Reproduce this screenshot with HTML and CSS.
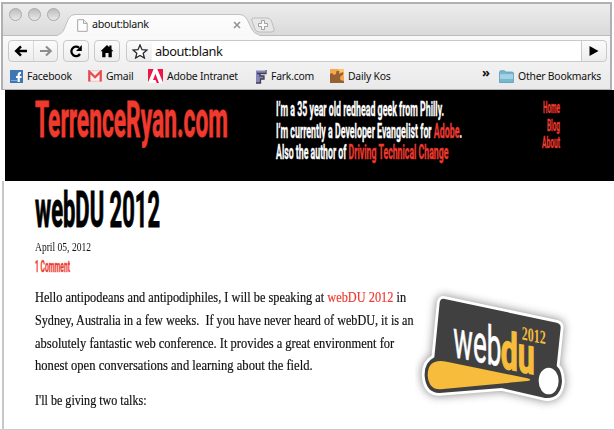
FILE: index.html
```html
<!DOCTYPE html>
<html lang="en">
<head>
<meta charset="utf-8">
<title>TerrenceRyan.com</title>
<link rel="stylesheet" href="styles.css">
</head>
<body>
<div class="window">
  <header class="chrome">
    <div class="tabstrip">
      <div class="lights"><i></i><i></i><i></i></div>
      <div class="tab">
        <svg class="tab-shape" width="202" height="22" viewBox="0 0 202 22"><defs><linearGradient id="tabfill" x2="0" y2="1"><stop stop-color="#fdfdfd"/><stop offset="1" stop-color="#f8f8f8"/></linearGradient></defs><path d="M0 21C9 20 7 1 17 1H182C192 1 191 20 201 21V22H0z" fill="url(#tabfill)"/><path d="M0 20.5C9 20 7 .5 17 .5H182C192 .5 191 20 201 20.5" fill="none" stroke="#c2c2c2"/></svg>
        <svg class="page-icon" width="11" height="13" viewBox="0 0 11 13"><path d="M.7.7H6.5L10.2 4.4V12.3H.7z" fill="#fff" stroke="#a5a5a5"/><path d="M6.5.7V4.4H10.2" fill="#eee" stroke="#a5a5a5"/></svg>
        <span class="tab-title">about:blank</span>
        <svg class="close" width="8" height="8" viewBox="0 0 8 8"><path d="M1 1L7 7M7 1L1 7" stroke="#929292" stroke-width="1.6"/></svg>
      </div>
      <svg class="newtab" width="24" height="16" viewBox="0 0 24 16"><path d="M2.5 1H16Q19 1 20.5 4L23 12Q24 15 21 15H8Q5 15 4 12L1 4Q0 1 2.5 1z" fill="#e7e7e7" stroke="#bcbcbc"/><path d="M10.5 3.5h3v3h3v3h-3v3h-3v-3h-3v-3h3z" fill="#fafafa" stroke="#999" stroke-width=".9"/></svg>
    </div>
    <div class="toolbar">
      <div class="btn pair">
        <span><svg width="14" height="12" viewBox="0 0 14 12"><path d="M13 6H3M7 1.4L2.2 6L7 10.6" fill="none" stroke="#000" stroke-width="2.5"/></svg></span>
        <span><svg width="14" height="12" viewBox="0 0 14 12"><path d="M1 6H11M7 1.4L11.8 6L7 10.6" fill="none" stroke="#8d8d8d" stroke-width="2.1"/></svg></span>
      </div>
      <div class="btn reload"><svg width="14" height="14" viewBox="0 0 14 14"><path d="M11 10A4.7 4.7 0 1 1 10 3.7" fill="none" stroke="#000" stroke-width="2.3"/><path d="M12.8 1V7H7z"/></svg></div>
      <div class="btn home"><svg width="14" height="14" viewBox="0 0 14 14"><path d="M7 1L.5 7.3H2.2V13.3H5.5V9H8.5V13.3H11.8V7.3H13.5L11.5 5.3V1.5H9.3V3.2z"/></svg></div>
      <div class="omnibox">
        <span class="star"><svg width="16" height="15" viewBox="0 0 16 15"><path d="M8 1L10 5.7L15 6.1L11.2 9.3L12.4 14L8 11.4L3.6 14L4.8 9.3L1 6.1L6 5.7z" fill="#fff" stroke="#292929" stroke-width="1.3"/></svg></span>
        <span class="url">about:blank</span>
        <span class="go"><svg width="10" height="10" viewBox="0 0 10 10"><path d="M.5 0L9.5 5L.5 10z"/></svg></span>
      </div>
    </div>
    <nav class="bookmarks">
      <a class="bm facebook"><svg width="13" height="13" viewBox="0 0 13 13"><path d="M0 0H13V13H0z" fill="#3f76b5"/><path d="M11 2H10Q7.6 2 7.6 4.5V6H6V8H7.6V12H9.8V8H11.5V6H9.8V4.7Q9.8 4 10.5 4H11z" fill="#fff"/><path d="M1 10.5H7" stroke="#83acd4"/></svg><span>Facebook</span></a>
      <a class="bm gmail"><svg width="14" height="12" viewBox="0 0 14 12"><path d="M.5.8H13.5V11.2H.5z" fill="#fbeeee" stroke="#eca7a7" stroke-width=".6"/><path d="M1.3 11.5V1.6L7 7.2L12.7 1.6V11.5" fill="none" stroke="#e64b50" stroke-width="2.2"/></svg><span>Gmail</span></a>
      <a class="bm adobe"><svg width="15" height="14" viewBox="0 0 15 14"><path d="M0 0H15V14H0z" fill="#fff"/><path d="M0 0H5.6L0 13.5zM9.3 0H15V13.5zM7.4 4.8L11 14H8.7L7.6 11H5z" fill="#ee1545"/></svg><span>Adobe Intranet</span></a>
      <a class="bm fark"><svg width="12" height="15" viewBox="0 0 12 15"><path d="M1 1.5H10V5H5V7H9V10H5V14H1" fill="#8584bd"/><path d="M2 4.5H11V1M5 5V7H9V10H5.5V14H1" fill="none" stroke="#3f3f4c" stroke-width="1.3"/></svg><span>Fark.com</span></a>
      <a class="bm kos"><svg width="14" height="14" viewBox="0 0 14 14"><path d="M0 0H14V14H0z" fill="#f6a84b"/><path d="M8 0H14V7z" fill="#ffc66b"/><path d="M0 14V5L2 4L4 6L6 5L6.5 2L9 2V5L13 3L13.5 5L10 8L10.5 11L14 12V14z" fill="#966035"/></svg><span>Daily Kos</span></a>
      <span class="more">»</span>
      <a class="bm other"><svg width="15" height="13" viewBox="0 0 15 13"><path d="M.5 12.5V2L1.5.7H5.5L6.5 2H13.5L14.5 3V12.5z" fill="#77b7d1" stroke="#4e94b1" stroke-width=".7"/><path d="M.9 4.2H14.1V9H.9z" fill="#a1d3e5"/></svg><span>Other Bookmarks</span></a>
    </nav>
  </header>

  <section class="masthead">
    <svg class="site-title display" width="200" height="52"><text x="0" y="38" textLength="193" lengthAdjust="spacingAndGlyphs">TerrenceRyan.com</text></svg>
    <svg class="intro display" width="200" height="70">
      <text x="0" y="17" textLength="168" lengthAdjust="spacingAndGlyphs">I’m a 35 year old redhead geek from Philly.</text>
      <text x="0" y="38.5" textLength="186" lengthAdjust="spacingAndGlyphs">I’m currently a Developer Evangelist for <tspan class="link">Adobe</tspan>.</text>
      <text x="0" y="60" textLength="172.5" lengthAdjust="spacingAndGlyphs">Also the author of <tspan class="link">Driving Technical Change</tspan></text>
    </svg>
    <svg class="site-nav display" width="20" height="60">
      <text x="3" y="14" textLength="17" lengthAdjust="spacingAndGlyphs">Home</text>
      <text x="7" y="31.5" textLength="13" lengthAdjust="spacingAndGlyphs">Blog</text>
      <text x="2" y="49" textLength="18" lengthAdjust="spacingAndGlyphs">About</text>
    </svg>
  </section>

  <main class="post">
    <svg class="post-title display" width="140" height="52"><text x="0" y="42" textLength="125" lengthAdjust="spacingAndGlyphs">webDU 2012</text></svg>
    <div class="date"><span>April 05, 2012</span></div>
    <svg class="comments display" width="60" height="16"><text x="0" y="13" textLength="35" lengthAdjust="spacingAndGlyphs">1 Comment</text></svg>
    <div class="columns">
      <div class="copy">
        <p>
          <span class="line l1">Hello antipodeans and antipodiphiles, I will be speaking at <a>webDU 2012</a> in</span>
          <span class="line l2">Sydney, Australia in a few weeks.&nbsp; If you have never heard of webDU, it is an</span>
          <span class="line l3">absolutely fantastic web conference. It provides a great environment for</span>
          <span class="line l4">honest open conversations and learning about the field.</span>
        </p>
        <p><span class="line l5">I'll be giving two talks:</span></p>
      </div>
      <svg class="badge" width="160" height="135" viewBox="45 20 480 405">
        <defs><filter id="shadow" x="-20%" y="-20%" width="140%" height="140%"><feGaussianBlur stdDeviation="13"/></filter></defs>
        <path d="M134 71Q121 68 119 82L103 246Q72 262 74 302Q78 352 118 353L305 338L435 368Q482 372 486 318Q485 285 470 272L482 158Q483 145 470 142Z" fill="#555" opacity=".6" stroke="#555" stroke-width="22" filter="url(#shadow)"/>
        <path d="M134 71Q121 68 119 82L103 246Q72 262 74 302Q78 352 118 353L305 338L435 368Q482 372 486 318Q485 285 470 272L482 158Q483 145 470 142Z" fill="#404041" stroke="#fff" stroke-width="17" stroke-linejoin="round" paint-order="stroke"/>
        <path d="M140 259Q83 248 83 300Q86 344 122 342L382 317Q400 313 382 309Z" fill="#f7bc3b"/>
        <ellipse cx="446" cy="317" rx="30" ry="40" fill="#fff"/>
        <g transform="translate(160 245) skewY(11)">
          <text class="web" y="0" textLength="144" lengthAdjust="spacingAndGlyphs">web</text>
          <text class="du" x="142" y="5" textLength="102" lengthAdjust="spacingAndGlyphs">du</text>
          <text class="year" x="205" y="-92" textLength="72" lengthAdjust="spacingAndGlyphs">2012</text>
        </g>
      </svg>
    </div>
  </main>
</div>
</body>
</html>
```
FILE: styles.css
```css
* { box-sizing: border-box; }
body { margin: 0; background: #fff; font-family: "Noto Sans", sans-serif; color: #111; }
svg { display: block; flex: none; }
.window { width: 614px; height: 430px; padding: 2px 0 0 1px; overflow: hidden; background: linear-gradient(#cbcbcb, #cbcbcb) 0 429px / 100% 1px no-repeat, #fff; }
.chrome { width: 611px; height: 88px; border: solid #b0b0b0; border-width: 2px 2px 1px; background: linear-gradient(#fafafa 30px, #e9e9e9); }
.tabstrip { height: 32px; display: flex; background: linear-gradient(#ececec, #dadada); border-bottom: 1px solid #bcbcbc; padding-left: 6px; }
.lights { display: flex; gap: 6px; padding-top: 4px; width: 50px; }
.lights i { width: 13px; height: 13px; flex: none; border-radius: 50%; border: 1px solid #a9a9a9; background: linear-gradient(#bdbdbd, #e9e9e9); }
.tab { width: 202px; height: 22px; margin: 10px 0 0 -1px; display: flex; align-items: center; position: relative; padding-left: 19px; }
.tab-shape { position: absolute; left: 0; top: 0; }
.page-icon, .close, .tab-title { position: relative; }
.tab-title { font-size: 10.7px; line-height: 20px; margin: -2px 0 0 4px; width: 141px; letter-spacing: -.3px; }
.close { margin-top: -1px; }
.newtab { margin: 13px 0 0 -9px; position: relative; }
.toolbar { height: 31px; display: flex; padding: 4px 0 0 5px; }
.btn, .omnibox { height: 22px; border: 1px solid #c9c9c9; border-radius: 4px; background: linear-gradient(#fbfbfb, #ededed); display: flex; align-items: center; justify-content: center; }
.pair { width: 50px; }
.pair span { width: 24px; height: 20px; display: flex; align-items: center; justify-content: center; }
.pair span + span { border-left: 1px solid #d8d8d8; }
.reload, .home { width: 26px; margin-left: 5px; }
.omnibox { width: 481px; margin-left: 6px; overflow: hidden; }
.star { width: 25px; display: flex; justify-content: center; }
.url { flex: 1; height: 20px; background: #fff; font-size: 12.8px; line-height: 20px; padding-left: 3px; letter-spacing: -.4px; }
.go { width: 25px; height: 20px; border-left: 1px solid #c9c9c9; display: flex; align-items: center; justify-content: center; }
.bookmarks { height: 18px; display: flex; align-items: center; padding-left: 7px; font-size: 10.4px; line-height: 18px; }
.bm { display: flex; align-items: center; gap: 4px; white-space: nowrap; flex: none; letter-spacing: -.22px; }
.facebook { width: 78px; }
.gmail { width: 60px; }
.adobe { width: 107px; }
.fark { width: 75px; }
.kos { width: 152px; }
.more { width: 17px; font-size: 13px; line-height: 12px; font-weight: 700; margin-top: -9px; }
.masthead { margin-left: 4px; width: 609px; height: 91px; background: #000; display: flex; padding: 9px 0 0 30px; }
.display { overflow: visible; font-family: "Liberation Sans Narrow", Roboto, sans-serif; font-weight: 700; }
.site-title { fill: #f03a2e; font-size: 50px; }
.site-title text { stroke: #f03a2e; stroke-width: .8px; }
.intro { margin-left: 41px; font-size: 19.5px; fill: #fff; stroke: #fff; stroke-width: .35px; }
.link { fill: #ee3b30; stroke: #ee3b30; }
.site-nav { margin-left: 64px; font-size: 16px; fill: #ee3b30; stroke: #ee3b30; stroke-width: .3px; }
.post { height: 248px; margin-left: 1px; border-left: 2px solid #c8c8c8; padding: 4px 0 0 31px; }
.post-title { font-size: 50px; fill: #000; }
.post-title text { stroke: #000; stroke-width: 1px; }
.date { height: 22px; font: 11.8px/20px "Liberation Serif", serif; }
.date span { display: inline-block; transform-origin: 0 0; transform: scaleX(.81); white-space: nowrap; }
.comments { font-size: 16px; fill: #ee3b30; stroke: #ee3b30; stroke-width: .3px; }
.columns { display: flex; }
.copy { width: 384px; padding-top: 11px; font: 14.8px/22.8px "Liberation Serif", serif; -webkit-text-stroke: .2px; }
.copy p { margin: 0 0 12px; }
.copy a { color: #ee3b30; }
.line { display: block; width: max-content; transform-origin: 0 0; }
.l1 { transform: scaleX(.833); }
.l2 { transform: scaleX(.822); }
.l3 { transform: scaleX(.844); }
.l4 { transform: scaleX(.851); }
.l5 { transform: scaleX(.816); }
.badge { margin: 7px 0 0 -4px; }
.web { fill: #fff; font: 400 160px "Liberation Sans Narrow", Roboto, sans-serif; stroke: #fff; stroke-width: 2px; }
.du { fill: #f7bc3b; font: 700 154px "Liberation Sans Narrow", Roboto, sans-serif; stroke: #f7bc3b; stroke-width: 4px; }
.year { fill: #f7bc3b; font: 700 58px "Liberation Serif", serif; }
```
